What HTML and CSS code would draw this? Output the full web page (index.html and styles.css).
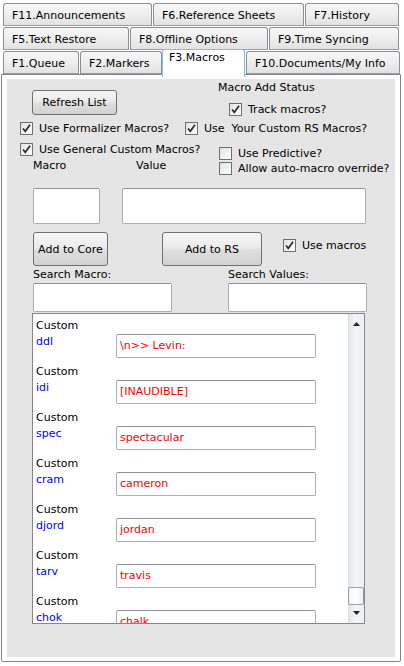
FILE: index.html
```html
<!DOCTYPE html>
<html>
<head>
<meta charset="utf-8">
<link rel="stylesheet" href="styles.css">
</head>
<body>
<div class="app">
  <div class="tabs">
    <div class="tabrow">
      <div class="tab w149">F11.Announcements</div>
      <div class="tab w151">F6.Reference Sheets</div>
      <div class="tab w94 last">F7.History</div>
    </div>
    <div class="tabrow">
      <div class="tab w126">F5.Text Restore</div>
      <div class="tab w138">F8.Offline Options</div>
      <div class="tab w130 last">F9.Time Syncing</div>
    </div>
    <div class="tabrow">
      <div class="tab w76">F1.Queue</div>
      <div class="tab w82 nogap">F2.Markers</div>
      <div class="tab w83 selected">F3.Macros</div>
      <div class="tab w154 last">F10.Documents/My Info</div>
    </div>
  </div>
  <div class="panel">
    <div class="content">
      <div class="row-a">
        <div class="btn btn-refresh">Refresh List</div>
        <div class="status-col">
          <div class="lbl">Macro Add Status</div>
          <div class="chk chk-track">
            <span class="box"><svg width="11" height="11" viewBox="0 0 11 11"><path d="M2 5.5 L4.3 8.3 L9 1.8" fill="none" stroke="#2b2b2b" stroke-width="1.7"/></svg></span>
            <span class="chk-text">Track macros?</span>
          </div>
        </div>
      </div>
      <div class="row-b">
        <div class="chk chk-form">
          <span class="box"><svg width="11" height="11" viewBox="0 0 11 11"><path d="M2 5.5 L4.3 8.3 L9 1.8" fill="none" stroke="#2b2b2b" stroke-width="1.7"/></svg></span>
          <span class="chk-text">Use Formalizer Macros?</span>
        </div>
        <div class="chk">
          <span class="box"><svg width="11" height="11" viewBox="0 0 11 11"><path d="M2 5.5 L4.3 8.3 L9 1.8" fill="none" stroke="#2b2b2b" stroke-width="1.7"/></svg></span>
          <span class="chk-text pre">Use  Your Custom RS Macros?</span>
        </div>
      </div>
      <div class="row-cd">
        <div class="col-left">
          <div class="chk">
            <span class="box"><svg width="11" height="11" viewBox="0 0 11 11"><path d="M2 5.5 L4.3 8.3 L9 1.8" fill="none" stroke="#2b2b2b" stroke-width="1.7"/></svg></span>
            <span class="chk-text">Use General Custom Macros?</span>
          </div>
          <div class="mv-labels">
            <span class="lbl lbl-macro">Macro</span>
            <span class="lbl">Value</span>
          </div>
        </div>
        <div class="col-right">
          <div class="chk chk-pred">
            <span class="box"></span>
            <span class="chk-text">Use Predictive?</span>
          </div>
          <div class="chk chk-allow">
            <span class="box"></span>
            <span class="chk-text">Allow auto-macro override?</span>
          </div>
        </div>
      </div>
      <div class="row-e">
        <div class="tb tb-macro"></div>
        <div class="tb tb-value"></div>
      </div>
      <div class="row-f">
        <div class="btn btn-core">Add to Core</div>
        <div class="btn btn-rs">Add to RS</div>
        <div class="chk chk-use">
          <span class="box"><svg width="11" height="11" viewBox="0 0 11 11"><path d="M2 5.5 L4.3 8.3 L9 1.8" fill="none" stroke="#2b2b2b" stroke-width="1.7"/></svg></span>
          <span class="chk-text">Use macros</span>
        </div>
      </div>
      <div class="row-g">
        <span class="lbl lbl-smacro">Search Macro:</span>
        <span class="lbl">Search Values:</span>
      </div>
      <div class="row-h">
        <div class="tb tb-search"></div>
        <div class="tb tb-search tb-svalues"></div>
      </div>
      <div class="list">
        <div class="items">
          <div class="item">
            <div class="item-left"><div class="item-type">Custom</div><div class="item-name">ddl</div></div>
            <div class="item-value">\n&gt;&gt; Levin:</div>
          </div>
          <div class="item">
            <div class="item-left"><div class="item-type">Custom</div><div class="item-name">idi</div></div>
            <div class="item-value">[INAUDIBLE]</div>
          </div>
          <div class="item">
            <div class="item-left"><div class="item-type">Custom</div><div class="item-name">spec</div></div>
            <div class="item-value">spectacular</div>
          </div>
          <div class="item">
            <div class="item-left"><div class="item-type">Custom</div><div class="item-name">cram</div></div>
            <div class="item-value">cameron</div>
          </div>
          <div class="item">
            <div class="item-left"><div class="item-type">Custom</div><div class="item-name">djord</div></div>
            <div class="item-value">jordan</div>
          </div>
          <div class="item">
            <div class="item-left"><div class="item-type">Custom</div><div class="item-name">tarv</div></div>
            <div class="item-value">travis</div>
          </div>
          <div class="item">
            <div class="item-left"><div class="item-type">Custom</div><div class="item-name">chok</div></div>
            <div class="item-value">chalk</div>
          </div>
        </div>
        <div class="scrollbar">
          <div class="sb-arrow sb-up"><svg width="7" height="4" viewBox="0 0 7 4"><path d="M0 4 L3.5 0 L7 4 Z" fill="#222"/></svg></div>
          <div class="sb-track"></div>
          <div class="sb-thumb"></div>
          <div class="sb-arrow sb-down"><svg width="7" height="4" viewBox="0 0 7 4"><path d="M0 0 L7 0 L3.5 4 Z" fill="#222"/></svg></div>
        </div>
      </div>
    </div>
  </div>
</div>
</body>
</html>
```
FILE: styles.css
```css
* { box-sizing: border-box; }
html, body { margin: 0; padding: 0; background: #ffffff; }
body {
  font-family: "DejaVu Sans", "Liberation Sans", sans-serif;
  font-size: 11px;
  line-height: 14px;
  color: #000;
  width: 404px;
  height: 666px;
  overflow: hidden;
}
.app { width: 404px; height: 666px; }

/* tabs */
.tabs { padding: 3px 0 0 3px; }
.tabrow { display: flex; height: 24px; }
.tabrow:last-child { height: 23px; }
.tab {
  height: 23px;
  margin-right: 1px;
  border: 1px solid #8c8e94;
  border-bottom-color: #9a9ca2;
  border-radius: 3px 3px 0 0;
  background: linear-gradient(#f7f7f7, #eeeeee 50%, #e2e2e2);
  padding: 5px 0 0 8px;
  white-space: nowrap;
}
.tab.last { margin-right: 0; }
.tab.nogap { margin-right: 0; }
.tab.selected {
  position: relative;
  z-index: 2;
  margin-top: -2px;
  height: 28px;
  background: #ffffff;
  border-color: #7fc2d6;
  border-bottom: none;
  padding: 1px 0 0 6px;
}
.w149 { width: 149px; }
.w151 { width: 151px; }
.w94 { width: 94px; }
.w126 { width: 126px; }
.w138 { width: 138px; }
.w130 { width: 130px; }
.w76 { width: 76px; }
.w82 { width: 82px; }
.w83 { width: 83px; }
.w154 { width: 154px; }

/* panel */
.panel {
  margin-left: 1px;
  width: 400px;
  height: 588px;
  border: 1px solid #7d8589;
  border-radius: 0 0 2px 2px;
  background: #ffffff;
  padding: 4px 5px;
}
.content {
  width: 388px;
  height: 578px;
  background: #e5e5e5;
}

/* controls */
.lbl { white-space: nowrap; }
.pre { white-space: pre; }
.btn {
  display: flex;
  align-items: center;
  justify-content: center;
  border: 1px solid #707070;
  border-radius: 3px;
  background: linear-gradient(#f6f6f6, #ebebeb 45%, #dedede 55%, #d2d2d2);
  white-space: nowrap;
}
.chk { display: flex; align-items: center; height: 13px; white-space: nowrap; }
.box {
  width: 13px;
  height: 13px;
  flex: none;
  border: 1px solid #707070;
  background: linear-gradient(135deg, #e2e2e2, #ffffff);
  display: flex;
  align-items: center;
  justify-content: center;
}
.box svg { display: block; }
.chk-text { margin-left: 6px; }
.tb {
  background: #ffffff;
  border: 1px solid #abadb3;
  border-top-color: #8f9298;
  border-radius: 2px;
}

/* row A */
.row-a { display: flex; align-items: flex-start; height: 37px; }
.btn-refresh { margin-left: 25px; margin-top: 11px; width: 85px; height: 25px; }
.status-col { margin-left: 101px; padding-top: 2px; }
.chk-track { margin-left: 11px; margin-top: 8px; }

/* row B */
.row-b { display: flex; margin-top: 6px; padding-left: 13px; height: 13px; }
.chk-form { width: 165px; }

/* rows C/D */
.row-cd { display: flex; margin-top: 8px; padding-left: 13px; height: 32px; }
.col-left { width: 199px; }
.mv-labels { display: flex; margin-top: 3px; padding-left: 13px; }
.lbl-macro { width: 103px; }
.chk-pred { margin-top: 4px; }
.chk-allow { margin-top: 2px; }

/* row E */
.row-e { display: flex; margin-top: 13px; padding-left: 26px; }
.tb-macro { width: 67px; height: 36px; }
.tb-value { width: 244px; height: 36px; margin-left: 22px; }

/* row F */
.row-f { display: flex; align-items: flex-start; margin-top: 8px; padding-left: 26px; }
.btn-core { width: 75px; height: 34px; padding-top: 2px; }
.btn-rs { width: 100px; height: 34px; margin-left: 54px; padding-top: 2px; }
.chk-use { margin-left: 21px; margin-top: 7px; }

/* row G */
.row-g { display: flex; margin-top: 2px; padding-left: 26px; }
.lbl-smacro { width: 195px; }

/* row H */
.row-h { display: flex; margin-top: 1px; padding-left: 26px; }
.tb-search { width: 139px; height: 29px; }
.tb-svalues { margin-left: 56px; }

/* list */
.list {
  display: flex;
  margin-top: 1px;
  margin-left: 25px;
  width: 333px;
  height: 311px;
  border: 1px solid #828790;
  background: #ffffff;
}
.items { flex: 1; overflow: hidden; padding: 4px 0 0 3px; }
.item { display: flex; height: 46px; }
.item-left { width: 80px; line-height: 16px; }
.item-name { color: #0000ff; }
.item-value {
  margin-top: 16px;
  width: 200px;
  height: 24px;
  border: 1px solid #abadb3;
  border-top-color: #8f9298;
  border-radius: 2px;
  color: #ff0000;
  padding-left: 3px;
  display: flex;
  align-items: center;
  white-space: nowrap;
  background: #fff;
}

.scrollbar {
  width: 16px;
  flex: none;
  display: flex;
  flex-direction: column;
  background: linear-gradient(to right, #e3e6ea, #f3f4f6 40%, #eef0f2);
  border-left: 1px solid #d8dbe0;
}
.sb-arrow { height: 17px; display: flex; align-items: center; justify-content: center; }
.sb-up { padding-top: 2px; }
.sb-track { flex: 1; }
.sb-thumb {
  height: 18px;
  margin: 0 0 1px -1px;
  width: 16px;
  border: 1px solid #979ca3;
  border-radius: 2px;
  background: linear-gradient(to right, #f5f5f5, #ffffff 50%, #eceef0);
}
.sb-down { height: 17px; padding-bottom: 4px; }
```
